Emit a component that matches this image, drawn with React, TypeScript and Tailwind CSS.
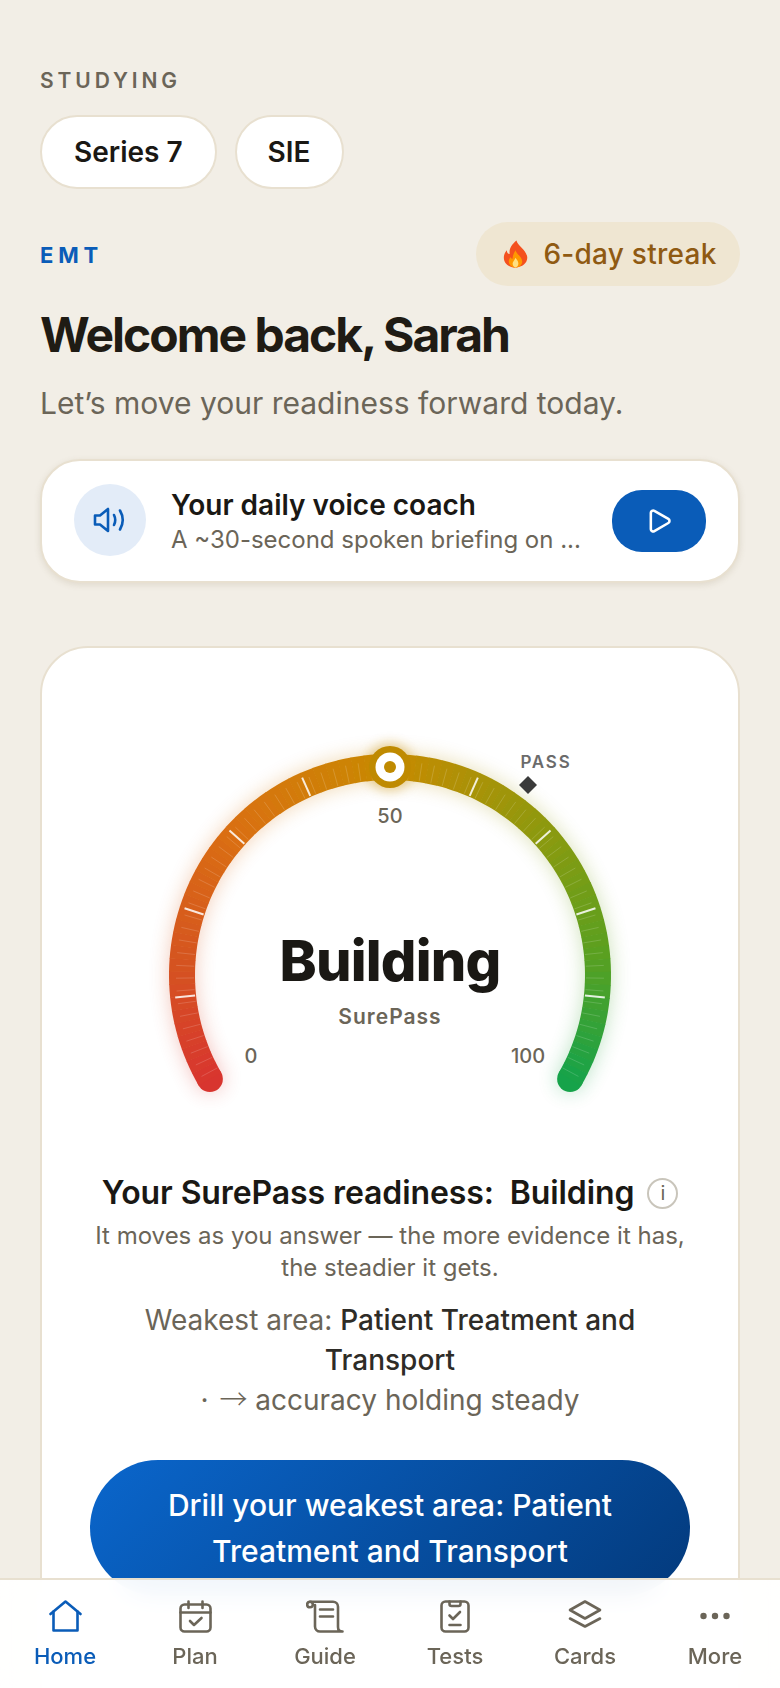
import { Play } from "lucide-react";
import type { ReactNode } from "react";

const CX = 260;
const CY = 276;
const R = 208;

const stops: [number, number[]][] = [
  [0, [216, 53, 47]],
  [14, [213, 84, 32]],
  [30, [218, 111, 18]],
  [50, [200, 138, 0]],
  [70, [139, 154, 15]],
  [85, [90, 160, 32]],
  [100, [22, 163, 74]],
];

const colorAt = (v: number) => {
  for (let i = 1; i < stops.length; i++) {
    if (v <= stops[i][0]) {
      const [a, ca] = stops[i - 1];
      const [b, cb] = stops[i];
      const t = (v - a) / (b - a);
      const c = ca.map((x, k) => Math.round(x + (cb[k] - x) * t));
      return `rgb(${c[0]},${c[1]},${c[2]})`;
    }
  }
  return "rgb(22,163,74)";
};

const pt = (deg: number, r: number) => {
  const a = (deg * Math.PI) / 180;
  return [CX + r * Math.cos(a), CY + r * Math.sin(a)];
};

const SEGS = 70;
const STEP = 240 / SEGS;

const Track = () => (
  <>
    <circle cx={pt(-210, R)[0]} cy={pt(-210, R)[1]} r={13} fill={colorAt(0)} />
    <circle cx={pt(30, R)[0]} cy={pt(30, R)[1]} r={13} fill={colorAt(100)} />
    {Array.from({ length: SEGS }).map((_, i) => {
      const a0 = -210 + i * STEP;
      const a1 = a0 + STEP + (i < SEGS - 1 ? 0.15 : 0);
      const [x0, y0] = pt(a0, R);
      const [x1, y1] = pt(a1, R);
      return (
        <path
          key={i}
          d={`M${x0} ${y0}A${R} ${R} 0 0 1 ${x1} ${y1}`}
          fill="none"
          stroke={colorAt(((i + 0.5) / SEGS) * 100)}
          strokeWidth={26}
        />
      );
    })}
  </>
);

const Gauge = () => (
  <div className="relative mx-auto h-[440px] w-[520px]">
    <svg width="520" height="440" viewBox="0 0 520 440" className="absolute inset-0 overflow-visible">
      <g className="opacity-30 blur-[10px]">
        <Track />
      </g>
      <Track />
      {Array.from({ length: SEGS }).map((_, i) => {
        const a = -210 + (i + 0.5) * STEP;
        const [x0, y0] = pt(a, 196);
        const [x1, y1] = pt(a, 214);
        return <line key={i} x1={x0} y1={y0} x2={x1} y2={y1} stroke="#fff" strokeOpacity={0.16} strokeWidth={1} />;
      })}
      {[10, 20, 30, 40, 60, 70, 80, 90].map((v) => {
        const a = -210 + v * 2.4;
        const [x0, y0] = pt(a, 196);
        const [x1, y1] = pt(a, 216);
        return <line key={v} x1={x0} y1={y0} x2={x1} y2={y1} stroke="#fff" strokeOpacity={0.85} strokeWidth={2} />;
      })}
      <circle cx={CX} cy={68} r={24} fill="#c48a00" className="opacity-40 blur-[6px]" />
      <circle cx={CX} cy={68} r={21} fill="#bf8a00" />
      <circle cx={CX} cy={68} r={14.500} fill="#fff" />
      <circle cx={CX} cy={68} r={6} fill="#bf8a00" />
      <path d="M398 77l9 9-9 9-9-9z" fill="#3a3a3a" />
    </svg>
    <span className="absolute top-[53px] left-[416px] -translate-x-1/2 text-[17px] leading-5 font-semibold tracking-[1.8px] whitespace-nowrap text-[#6b6b6b]">
      PASS
    </span>
    <span className="absolute top-[105px] left-[260px] -translate-x-1/2 text-[20px] leading-6 font-medium text-[#6b6558]">50</span>
    <span className="absolute top-[228px] right-0 left-0 text-center text-[56px] leading-[68px] font-extrabold tracking-[-0.8px] text-[#1a1814]">
      Building
    </span>
    <span className="absolute top-[306px] right-0 left-0 text-center text-[21px] leading-6 font-semibold tracking-[1px] text-[#6b6558]">
      SurePass
    </span>
    <span className="absolute top-[345px] left-[121px] -translate-x-1/2 text-[20px] leading-6 font-medium text-[#6b6558]">0</span>
    <span className="absolute top-[345px] left-[398px] -translate-x-1/2 text-[20px] leading-6 font-medium text-[#6b6558]">100</span>
  </div>
);

const navStroke = {
  fill: "none",
  stroke: "currentColor",
  strokeWidth: 2.6,
  strokeLinecap: "round" as const,
  strokeLinejoin: "round" as const,
};

const HomeIcon = () => (
  <svg width="33" height="32" viewBox="0 0 33 32" {...navStroke}>
    <path d="M1.500 14 16.500 1.500 31.500 14" />
    <path d="M4.500 11.500V30.500H28.500V11.500" />
  </svg>
);

const PlanIcon = () => (
  <svg width="33" height="33" viewBox="0 0 33 33" {...navStroke}>
    <rect x="1.500" y="4.500" width="30" height="27" rx="4" />
    <path d="M9.500 1.500V8M23.500 1.500V8M1.500 12.500H31.500" />
    <path d="M11 21l4 4 7.500-7" />
  </svg>
);

const GuideIcon = () => (
  <svg width="38" height="33" viewBox="0 0 38 33" {...navStroke}>
    <circle cx="4" cy="4.500" r="2.800" />
    <path d="M4 1.700H27a5 5 0 0 1 5 5V27q0 4.500 4.500 4.500H14a5 5 0 0 1-5-5V5" />
    <path d="M14 9.500H27M14 16.500H27" />
  </svg>
);

const TestsIcon = () => (
  <svg width="30" height="33" viewBox="0 0 30 33" {...navStroke}>
    <rect x="1.500" y="1.500" width="27" height="30" rx="4" />
    <path d="M9.500 1.500V4a2 2 0 0 0 2 2h7a2 2 0 0 0 2-2V1.500" />
    <path d="M9.500 15.500l3.500 3.500 7-7M9.500 25H20.500" />
  </svg>
);

const CardsIcon = () => (
  <svg width="34" height="28" viewBox="0 0 34 28" {...navStroke}>
    <path d="M17 1.500 32 10 17 18.500 2 10z" />
    <path d="M2 18.500 17 26.500 32 18.500" />
  </svg>
);

const MoreIcon = () => (
  <svg width="32" height="32" viewBox="0 0 32 32" fill="currentColor">
    <circle cx="4.500" cy="16" r="3.200" />
    <circle cx="16" cy="16" r="3.200" />
    <circle cx="27.500" cy="16" r="3.200" />
  </svg>
);

const NavItem = ({ icon, label, active }: { icon: ReactNode; label: string; active?: boolean }) => (
  <div className={`flex flex-col items-center ${active ? "text-[#0a5cb8]" : "text-[#6b6558]"}`}>
    <div className="flex h-[36px] items-start justify-center">{icon}</div>
    <span className="mt-[6px] text-[22px] leading-7 font-medium">{label}</span>
  </div>
);

export default function App() {
  return (
    <div
      className="h-[1688px] overflow-hidden bg-[#f2eee6] px-10 pt-[67px]"
      style={{ fontFamily: "Inter, 'Noto Sans', sans-serif" }}
    >
      <div className="text-[21px] leading-7 font-semibold tracking-[3.9px] text-[#6b6558]">STUDYING</div>
      <div className="mt-[20px] flex gap-[18px]">
        <button className="h-[74px] rounded-full border-2 border-[#e8e0d0] bg-white px-[32px] text-[28px] font-semibold text-[#1a1814]">
          Series 7
        </button>
        <button className="h-[74px] rounded-full border-2 border-[#e8e0d0] bg-white px-[31px] text-[28px] font-semibold text-[#1a1814]">
          SIE
        </button>
      </div>

      <div className="mt-[33px] flex items-center justify-between">
        <span className="pt-[2px] text-[22px] font-bold tracking-[4.8px] text-[#0a5cb8]">EMT</span>
        <div className="flex h-[64px] w-[264px] items-center justify-center gap-[15px] rounded-full bg-[#efe6d2] pl-[4px]">
          <svg width="25" height="28" viewBox="0 0 26 28">
            <path d="M14 0c1 5 9 9 11 16 1.500 6-4 12-12 12S0 23 1 16c.5-3 2-5 3-6 0 2 1 4 3 4C6 9 9 4 14 0z" fill="#f4511e" />
            <path d="M13 10c1 4 7 7 7 12 0 3-3 6-7 6s-7-3-7-6c0-2 1-4 2-5 0 1 1 2 2 2 0-3 1-6 3-9z" fill="#ff9800" />
            <path d="M13 18c1 2 3 3 3 6 0 2-1.500 4-3 4s-3-2-3-4c0-2 2-3 3-6z" fill="#ffe082" />
          </svg>
          <span className="text-[28px] font-medium tracking-[0.25px] whitespace-nowrap text-[#8f5a12]">6-day streak</span>
        </div>
      </div>

      <h1 className="mt-[21px] text-[48px] leading-[56px] font-bold tracking-[-2px] text-[#1f1b14]">Welcome back, Sarah</h1>
      <p className="mt-[20px] text-[30px] leading-10 text-[#6b6558]">Let’s move your readiness forward today.</p>

      <div className="mt-[36px] flex h-[124px] items-center rounded-[40px] border-2 border-[#e8e0d0] bg-white pr-[32px] pl-[32px] shadow-[0_2px_6px_rgba(120,100,60,0.15)]">
        <div className="mb-[2px] flex h-[72px] w-[72px] shrink-0 items-center justify-center rounded-full bg-[#e3ecf8] text-[#0a5cb8]">
          <svg width="34" height="26" viewBox="0 0 34 26" fill="none" stroke="currentColor" strokeWidth="2.6" strokeLinecap="round" strokeLinejoin="round">
            <path d="M2 8.500H7L15 2V24L7 17.500H2z" />
            <path d="M21 8q2.500 5 0 10" />
            <path d="M27 3.500q5.500 9.500 0 19" />
          </svg>
        </div>
        <div className="ml-[25px] min-w-0 flex-1">
          <div className="text-[28px] leading-9 font-semibold text-[#1a1814]">Your daily voice coach</div>
          <div className="w-[410px] truncate pt-[1px] text-[24px] leading-8 text-[#6b6558]">A ~30-second spoken briefing on ...</div>
        </div>
        <button className="flex h-[62px] w-[94px] shrink-0 items-center justify-center rounded-[30px] bg-[#0a5cb8] text-white">
          <Play size={28} strokeWidth={2.2} />
        </button>
      </div>

      <div className="mt-[63px] h-[1200px] rounded-[48px] border-2 border-[#e8e0d0] bg-white pt-[51px]">
        <Gauge />
        <div className="mt-[34px] flex items-center justify-center gap-[13px]">
          <span className="text-[32px] leading-10 font-semibold tracking-[-0.1px] whitespace-nowrap text-[#1a1814]">Your SurePass readiness:&nbsp; Building</span>
          <span className="flex h-[31px] w-[31px] items-center justify-center rounded-full border-2 border-[#c9c5bb] text-[20px] text-[#6b6558]">i</span>
        </div>
        <p className="mx-auto mt-[7px] w-[600px] text-center text-[24px] leading-8 text-[#6b6558]">
          It moves as you answer — the more evidence it has, the steadier it gets.
        </p>
        <p className="mx-auto mt-[16px] w-[600px] text-center text-[28px] leading-10 text-[#6b6558]">
          Weakest area: <span className="font-medium text-[#2e2c27]">Patient Treatment and Transport</span>
          <br />· <span className="ml-[3px] font-['Noto_Sans_CJK_JP'] leading-[0] font-light">→</span> accuracy holding steady
        </p>
        <button className="mx-auto mt-[40px] block h-[136px] w-[600px] rounded-full bg-[linear-gradient(135deg,#0a66cc,#033a7c)] px-[40px] text-[30px] leading-[46px] font-medium text-white">
          Drill your weakest area: Patient Treatment and Transport
        </button>
      </div>

      <nav className="fixed right-0 bottom-0 left-0 grid h-[110px] grid-cols-6 border-t-2 border-[#e8e0d0] bg-white/95 pt-[20px] backdrop-blur-md">
        <NavItem active label="Home" icon={<HomeIcon />} />
        <NavItem label="Plan" icon={<PlanIcon />} />
        <NavItem label="Guide" icon={<GuideIcon />} />
        <NavItem label="Tests" icon={<TestsIcon />} />
        <NavItem label="Cards" icon={<CardsIcon />} />
        <NavItem label="More" icon={<MoreIcon />} />
      </nav>
    </div>
  );
}
